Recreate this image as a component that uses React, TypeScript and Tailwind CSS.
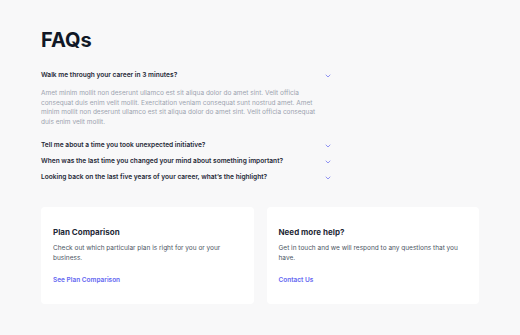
import { ChevronDown } from "lucide-react"

const faqs = [
  {
    q: "Walk me through your career in 3 minutes?",
    a: "Amet minim mollit non deserunt ullamco est sit aliqua dolor do amet sint. Velit officia consequat duis enim velit mollit. Exercitation veniam consequat sunt nostrud amet. Amet minim mollit non deserunt ullamco est sit aliqua dolor do amet sint. Velit officia consequat duis enim velit mollit.",
  },
  { q: "Tell me about a time you took unexpected initiative?" },
  { q: "When was the last time you changed your mind about something important?" },
  { q: "Looking back on the last five years of your career, what\u2019s the highlight?" },
]

function Card({ title, text, link }: { title: string; text: string; link: string }) {
  return (
    <div className="flex-1 rounded-[4px] bg-white px-3 pt-[20px] pb-[19px]">
      <h3 className="text-[8px] leading-[11px] font-bold text-[#1f2937]">{title}</h3>
      <p className="mt-[5px] text-[6.5px] leading-[10px] text-[#4b5563]">{text}</p>
      <a className="mt-[12px] block text-[6.5px] leading-[10px] font-semibold text-[#6366f1]">{link}</a>
    </div>
  )
}

export default function App() {
  return (
    <div className="min-h-[335px] w-full bg-[#f8f8f9] font-['Inter',sans-serif]">
      <div className="mx-auto w-[438px] pt-[27px]">
        <h1 className="text-[20px] leading-[26px] font-bold text-[#111827]">FAQs</h1>
        <div className="mt-[18px] w-[292px]">
          {faqs.map((f, i) => (
            <div key={i} className={i === 1 ? "mt-[13px]" : i > 1 ? "mt-[6px]" : ""}>
              <div className="flex items-center justify-between h-[10px]">
                <span className="text-[6.6px] font-semibold text-[#1f2937]">{f.q}</span>
                <ChevronDown className="mr-[1px] h-[8px] w-[8px] text-[#7c7ff2]" strokeWidth={2.5} />
              </div>
              {f.a && (
                <p className="mt-[8px] pr-1 text-[6.5px] leading-[9.7px] text-[#9ca3af]">{f.a}</p>
              )}
            </div>
          ))}
        </div>
        <div className="mt-[24px] flex gap-[13px]">
          <Card
            title="Plan Comparison"
            text="Check out which particular plan is right for you or your business."
            link="See Plan Comparison"
          />
          <Card
            title="Need more help?"
            text="Get in touch and we will respond to any questions that you have."
            link="Contact Us"
          />
        </div>
      </div>
    </div>
  )
}
